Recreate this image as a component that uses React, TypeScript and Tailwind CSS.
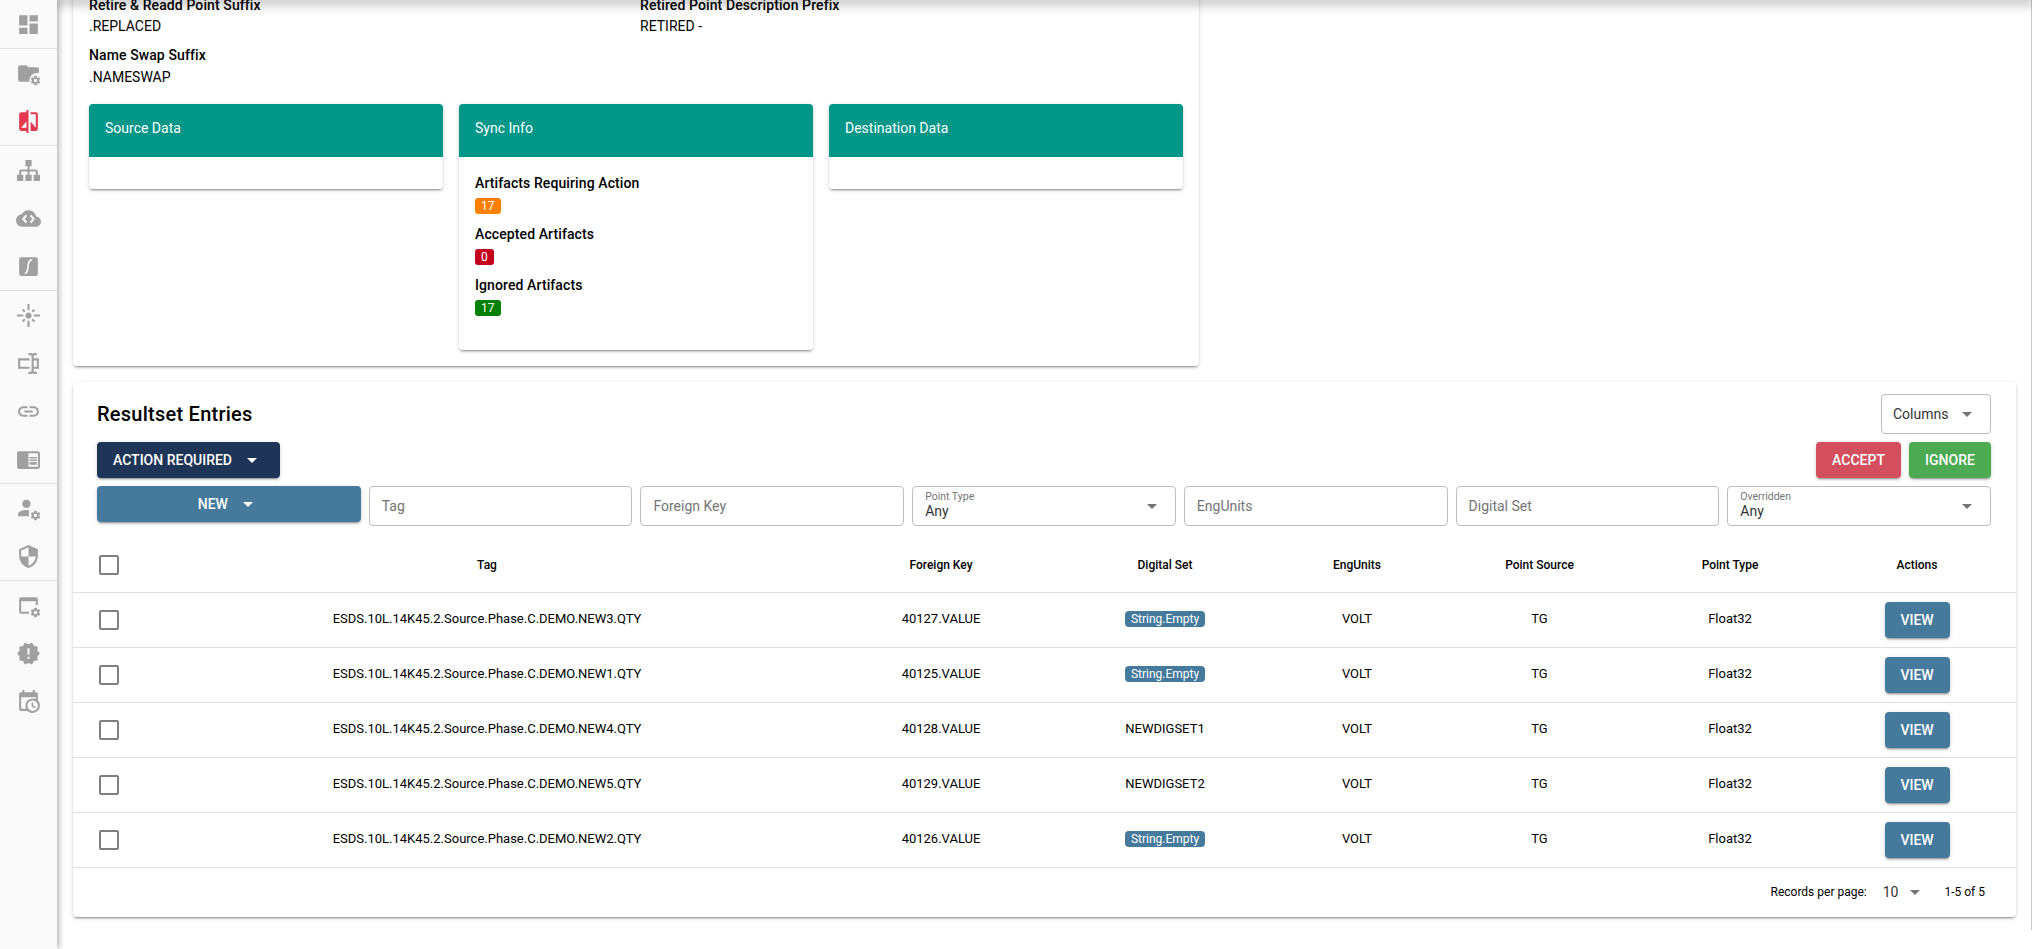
import { ReactNode } from 'react';

const COG =
  'M12,15.5A3.5,3.5 0 0,1 8.5,12A3.5,3.5 0 0,1 12,8.5A3.5,3.5 0 0,1 15.5,12A3.5,3.5 0 0,1 12,15.5M19.43,12.97C19.47,12.65 19.5,12.33 19.5,12C19.5,11.67 19.47,11.34 19.43,11L21.54,9.37C21.73,9.22 21.78,8.95 21.66,8.73L19.66,5.27C19.54,5.05 19.27,4.96 19.05,5.05L16.56,6.05C16.04,5.66 15.5,5.32 14.87,5.07L14.5,2.42C14.46,2.18 14.25,2 14,2H10C9.75,2 9.54,2.18 9.5,2.42L9.13,5.07C8.5,5.32 7.96,5.66 7.44,6.05L4.95,5.05C4.73,4.96 4.46,5.05 4.34,5.27L2.34,8.73C2.21,8.95 2.27,9.22 2.46,9.37L4.57,11C4.53,11.34 4.5,11.67 4.5,12C4.5,12.33 4.53,12.65 4.57,12.97L2.46,14.63C2.27,14.78 2.21,15.05 2.34,15.27L4.34,18.73C4.46,18.95 4.73,19.03 4.95,18.95L7.44,17.94C7.96,18.34 8.5,18.68 9.13,18.93L9.5,21.58C9.54,21.82 9.75,22 10,22H14C14.25,22 14.46,21.82 14.5,21.58L14.87,18.93C15.5,18.67 16.04,18.34 16.56,17.94L19.05,18.95C19.27,19.03 19.54,18.95 19.66,18.73L21.66,15.27C21.78,15.05 21.73,14.78 21.54,14.63L19.43,12.97Z';

const Gear = () => <path transform="translate(13.2 13.2) scale(0.46)" d={COG} />;

const Icon = ({ children, red }: { children: ReactNode; red?: boolean }) => (
  <div className="flex h-12 items-center justify-center">
    <svg viewBox="0 0 24 24" className={`h-[25px] w-[25px] ${red ? 'fill-[#e53950]' : 'fill-[#a0a0a0]'}`}>
      {children}
    </svg>
  </div>
);

const navGroups: ReactNode[][] = [
  [<path key="a" d="M13,3V9H21V3M13,21H21V11H13M3,21H11V15H3M3,13H11V3H3V13Z" />],
  [
    <g key="a">
      <path d="M10,4H4C2.89,4 2,4.89 2,6V18A2,2 0 0,0 4,20H13A7,7 0 0,1 20.5,11.6H22V8C22,6.89 21.1,6 20,6H12L10,4Z" />
      <Gear />
    </g>,
    <path key="b" d="M19,3H14V5H19V18L14,12V21H19A2,2 0 0,0 21,19V5C21,3.89 20.1,3 19,3M10,18H5L10,12M10,3H5C3.89,3 3,3.89 3,5V19A2,2 0 0,0 5,21H10V23H12V1H10V3Z" />,
  ],
  [
    <path key="a" d="M9,2V8H11V11H5C3.89,11 3,11.89 3,13V16H1V22H7V16H5V13H11V16H9V22H15V16H13V13H19V16H17V22H23V16H21V13C21,11.89 20.11,11 19,11H13V8H15V2H9Z" />,
    <g key="b">
      <path d="M19.35,10.03C18.67,6.59 15.64,4 12,4C9.11,4 6.6,5.64 5.35,8.03C2.34,8.36 0,10.9 0,14A6,6 0 0,0 6,20H19A5,5 0 0,0 24,15C24,12.36 21.95,10.22 19.35,10.03Z" />
      <path d="M10,9L7,12.5L10,16M14,9L17,12.5L14,16" className="fill-none stroke-[#fafafa] stroke-2" />
    </g>,
    <g key="c">
      <rect x="3" y="3" width="18" height="18" rx="2" />
      <path d="M8.5,18.5C11,18.5 11,16 11.5,12C12,8 12.5,5.5 15.5,5.5" className="fill-none stroke-[#fafafa] stroke-[1.6]" />
    </g>,
  ],
  [
    <path key="a" d="M7 11H1v2h6v-2zm2.17-3.24L7.05 5.64 5.64 7.05l2.12 2.12 1.41-1.41zM13 1h-2v6h2V1zm5.36 6.05l-1.41-1.41-2.12 2.12 1.41 1.41 2.12-2.12zM17 11v2h6v-2h-6zm-5-2c-1.66 0-3 1.34-3 3s1.34 3 3 3 3-1.34 3-3-1.34-3-3-3zm2.83 7.24l2.12 2.12 1.41-1.41-2.12-2.12-1.41 1.41zm-9.19.71l1.41 1.41 2.12-2.12-1.41-1.41-2.12 2.12zM11 23h2v-6h-2v6z" />,
    <path key="b" d="M17,7H22V17H17V19A1,1 0 0,0 18,20H20V22H17.5C16.95,22 16,21.55 16,21C16,21.55 15.05,22 14.5,22H12V20H14A1,1 0 0,0 15,19V5A1,1 0 0,0 14,4H12V2H14.5C15.05,2 16,2.45 16,3C16,2.45 16.95,2 17.5,2H20V4H18A1,1 0 0,0 17,5V7M2,7H13V9H4V15H13V17H2V7M20,15V9H17V15H20Z" />,
    <path key="c" d="M3.9 12c0-1.71 1.39-3.1 3.1-3.1h4V7H7c-2.76 0-5 2.24-5 5s2.24 5 5 5h4v-1.9H7c-1.71 0-3.1-1.39-3.1-3.1zM8 13h8v-2H8v2zm9-6h-4v1.9h4c1.71 0 3.1 1.39 3.1 3.1s-1.39 3.1-3.1 3.1h-4V17h4c2.76 0 5-2.24 5-5s-2.24-5-5-5z" />,
    <path key="d" d="M21 4H3c-1.1 0-2 .9-2 2v13c0 1.1.9 2 2 2h18c1.1 0 2-.9 2-2V6c0-1.1-.9-2-2-2zm0 15h-9V6h9v13zm-8-9.5h7V11h-7zm0 2.5h7v1.5h-7zm0 2.5h7V17h-7z" />,
  ],
  [
    <g key="a">
      <circle cx="10" cy="7.5" r="4" />
      <path d="M10,13.5C5.58,13.5 2,15.3 2,17.5V19.5H12.5A7,7 0 0,1 13,14C12.1,13.7 11.1,13.5 10,13.5Z" />
      <Gear />
    </g>,
    <path key="b" d="M12 1L3 5v6c0 5.55 3.84 10.74 9 12 5.16-1.26 9-6.45 9-12V5l-9-4zm0 10.99h7c-.53 4.12-3.28 7.79-7 8.94V12H5V6.3l7-3.11v8.8z" />,
  ],
  [
    <g key="a">
      <path d="M21,11.5V6A2,2 0 0,0 19,4H5A2,2 0 0,0 3,6V18A2,2 0 0,0 5,20H12.5V18H5V8H19V11.5H21Z" />
      <Gear />
    </g>,
    <path key="b" d="M23,12L20.56,9.22L20.9,5.54L17.29,4.72L15.4,1.54L12,3L8.6,1.54L6.71,4.72L3.1,5.53L3.44,9.21L1,12L3.44,14.78L3.1,18.47L6.71,19.29L8.6,22.47L12,21L15.4,22.46L17.29,19.28L20.9,18.46L20.56,14.78L23,12M13,17H11V15H13V17M13,13H11V7H13V13Z" />,
    <path key="c" d="M15,13H16.5V15.82L18.94,17.23L18.19,18.53L15,16.69V13M19,8H5V19H9.67C9.24,18.09 9,17.07 9,16A7,7 0 0,1 16,9C17.07,9 18.09,9.24 19,9.67V8M5,21C3.89,21 3,20.1 3,19V5C3,3.89 3.89,3 5,3H6V1H8V3H16V1H18V3H19A2,2 0 0,1 21,5V11.1C22.24,12.36 23,14.09 23,16A7,7 0 0,1 16,23C14.09,23 12.36,22.24 11.1,21H5M16,11A5,5 0 0,0 11,16A5,5 0 0,0 16,21A5,5 0 0,0 21,16A5,5 0 0,0 16,11Z" />,
  ],
];

const MenuDown = ({ white }: { white?: boolean }) => (
  <svg viewBox="0 0 24 24" className={`h-6 w-6 shrink-0 ${white ? 'fill-white' : 'fill-[#757575]'}`}>
    <path d="M7,10L12,15L17,10H7Z" />
  </svg>
);

const Checkbox = () => <div className="mx-auto h-5 w-5 rounded-[2px] border-2 border-[#7f7f7f]" />;

const elevation = 'shadow-[0_3px_1px_-2px_rgba(0,0,0,0.2),0_2px_2px_0_rgba(0,0,0,0.14),0_1px_5px_0_rgba(0,0,0,0.12)]';

const rows = [
  { tag: 'ESDS.10L.14K45.2.Source.Phase.C.DEMO.NEW3.QTY', key: '40127.VALUE', set: 'String.Empty' },
  { tag: 'ESDS.10L.14K45.2.Source.Phase.C.DEMO.NEW1.QTY', key: '40125.VALUE', set: 'String.Empty' },
  { tag: 'ESDS.10L.14K45.2.Source.Phase.C.DEMO.NEW4.QTY', key: '40128.VALUE', set: 'NEWDIGSET1' },
  { tag: 'ESDS.10L.14K45.2.Source.Phase.C.DEMO.NEW5.QTY', key: '40129.VALUE', set: 'NEWDIGSET2' },
  { tag: 'ESDS.10L.14K45.2.Source.Phase.C.DEMO.NEW2.QTY', key: '40126.VALUE', set: 'String.Empty' },
];

const Field = ({ label }: { label: string }) => (
  <div className="flex h-10 items-center rounded border border-[#bdbdbd] px-3 text-sm text-[#757575]">{label}</div>
);

const SelectField = ({ label }: { label: string }) => (
  <div className="flex h-10 items-center justify-between rounded border border-[#bdbdbd] pl-3 pr-[11px]">
    <div className="-mt-[2px] flex flex-col">
      <span className="text-[10.5px] leading-[12px] text-[#757575]">{label}</span>
      <span className="text-sm leading-[16px] text-[#333]">Any</span>
    </div>
    <MenuDown />
  </div>
);

const SyncCard = ({ title, children }: { title: string; children?: ReactNode }) => (
  <div className={`overflow-hidden rounded bg-white ${elevation}`}>
    <div className="h-[53px] bg-[#009688] px-4 pt-3 text-sm leading-6 text-white">{title}</div>
    <div className="min-h-8">{children}</div>
  </div>
);

const Stat = ({ label, value, color }: { label: string; value: number; color: string }) => (
  <div className="mb-[10px]">
    <div className="text-sm font-medium leading-5 tracking-[0.1px] text-black">{label}</div>
    <span className={`mt-[5px] block h-4 w-fit rounded-[3px] px-1.5 text-xs leading-4 text-white ${color}`}>{value}</span>
  </div>
);

export default function App() {
  return (
    <div className="relative flex h-[949px] overflow-hidden bg-white font-['Roboto',sans-serif] text-sm text-black">
      <div className="absolute inset-x-0 top-0 z-10 h-0 shadow-[0_0_12px_3px_rgba(0,0,0,0.4)]" />

      <aside className="relative z-20 w-[57px] shrink-0 bg-[#fafafa] shadow-[2px_0_6px_rgba(0,0,0,0.3)]">
        {navGroups.map((group, i) => (
          <div key={i} className="border-b border-[#e0e0e0] last:border-b-0">
            {group.map((icon, j) => (
              <Icon key={j} red={i === 1 && j === 1}>
                {icon}
              </Icon>
            ))}
          </div>
        ))}
      </aside>

      <main className="flex-1 pl-4 pr-[15px]">
        <section className={`-mt-6 w-[1126px] rounded bg-white px-4 pb-4 pt-[19px] ${elevation}`}>
          <div className="grid grid-cols-[551px_1fr] gap-y-2 leading-[21px]">
            <div>
              <div className="font-medium tracking-[0.1px]">Retire &amp; Readd Point Suffix</div>
              <div>.REPLACED</div>
            </div>
            <div>
              <div className="font-medium tracking-[0.1px]">Retired Point Description Prefix</div>
              <div>RETIRED -</div>
            </div>
            <div>
              <div className="font-medium tracking-[0.1px]">Name Swap Suffix</div>
              <div className="mt-px">.NAMESWAP</div>
            </div>
          </div>
          <div className="mt-4 grid grid-cols-3 items-start gap-4">
            <SyncCard title="Source Data" />
            <SyncCard title="Sync Info">
              <div className="px-4 pb-6 pt-4">
                <Stat label="Artifacts Requiring Action" value={17} color="bg-[#ff8000]" />
                <Stat label="Accepted Artifacts" value={0} color="bg-[#c4001d]" />
                <Stat label="Ignored Artifacts" value={17} color="bg-[#008000]" />
              </div>
            </SyncCard>
            <SyncCard title="Destination Data" />
          </div>
        </section>

        <section className={`mt-4 rounded bg-white pt-3 ${elevation}`}>
          <div className="pl-6 pr-[25px]">
            <div className="flex h-10 items-center justify-between">
              <h2 className="text-xl font-medium tracking-[0.25px]">Resultset Entries</h2>
              <div className="flex h-10 w-[110px] items-center justify-between rounded border border-[#bdbdbd] pl-[11px] pr-[11px] text-[#333]">
                Columns
                <MenuDown />
              </div>
            </div>
            <div className="mt-2 flex h-9 items-center justify-between">
              <button className={`flex h-9 w-[183px] items-center justify-center gap-2 rounded bg-[#1e3557] text-sm font-medium uppercase text-white ${elevation}`}>
                Action Required
                <MenuDown white />
              </button>
              <div className="flex gap-2">
                <button className={`h-9 w-[85px] rounded bg-[#d44f5e] text-sm font-medium uppercase text-white ${elevation}`}>Accept</button>
                <button className={`h-9 w-[82px] rounded bg-[#4caa52] text-sm font-medium uppercase text-white ${elevation}`}>Ignore</button>
              </div>
            </div>
            <div className="mt-2 grid grid-cols-7 items-start gap-2">
              <button className={`flex h-9 items-center justify-center gap-2 rounded bg-[#457a9d] text-sm font-medium uppercase text-white ${elevation}`}>
                New
                <MenuDown white />
              </button>
              <Field label="Tag" />
              <Field label="Foreign Key" />
              <SelectField label="Point Type" />
              <Field label="EngUnits" />
              <Field label="Digital Set" />
              <SelectField label="Overridden" />
            </div>
          </div>

          <table className="mt-3 w-full table-fixed text-center text-[13px]">
            <thead>
              <tr className="h-[54px] border-b border-[#e0e0e0] text-xs">
                <th className="w-[72px]">
                  <Checkbox />
                </th>
                <th className="w-[684px] font-medium">Tag</th>
                <th className="w-[224px] font-medium">Foreign Key</th>
                <th className="w-[224px] font-medium">Digital Set</th>
                <th className="w-[160px] font-medium">EngUnits</th>
                <th className="w-[205px] font-medium">Point Source</th>
                <th className="w-[176px] font-medium">Point Type</th>
                <th className="font-medium">Actions</th>
              </tr>
            </thead>
            <tbody>
              {rows.map((row) => (
                <tr key={row.key} className="h-[55px] border-b border-[#e0e0e0]">
                  <td>
                    <Checkbox />
                  </td>
                  <td>{row.tag}</td>
                  <td>{row.key}</td>
                  <td>
                    {row.set === 'String.Empty' ? (
                      <span className="inline-block h-4 rounded bg-[#457a9d] px-[6px] text-xs leading-4 text-white">{row.set}</span>
                    ) : (
                      row.set
                    )}
                  </td>
                  <td>VOLT</td>
                  <td>TG</td>
                  <td>Float32</td>
                  <td>
                    <button className={`h-9 w-[65px] rounded bg-[#457a9d] text-sm font-medium uppercase text-white ${elevation}`}>View</button>
                  </td>
                </tr>
              ))}
            </tbody>
          </table>

          <div className="flex h-[49px] items-center justify-end pr-[31px] text-xs">
            <span>Records per page:</span>
            <span className="ml-4 text-sm text-[#333]">10</span>
            <span className="ml-[5px]">
              <MenuDown />
            </span>
            <span className="ml-[17px]">1-5 of 5</span>
          </div>
        </section>
      </main>

      <div className="h-[930px] w-px shrink-0 bg-[#c8c8c8]" />
    </div>
  );
}
